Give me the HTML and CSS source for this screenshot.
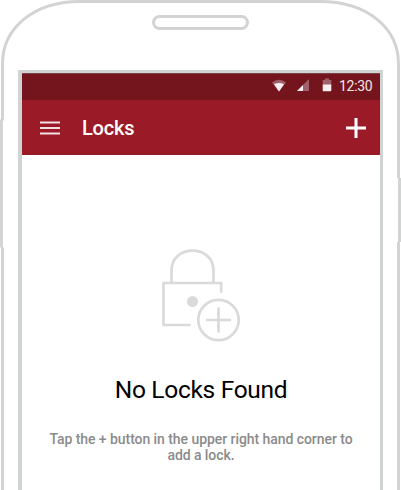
FILE: index.html
```html
<!DOCTYPE html>
<html lang="en">
<head>
<meta charset="utf-8">
<title>Locks</title>
<link rel="stylesheet" href="styles.css">
</head>
<body>
<div class="phone">
  <svg class="shell" viewBox="0 0 401 490" aria-hidden="true">
    <path d="M2.500 490V247.500M1.400 247.500V119.500M2.500 120.500V64C2.500 27 35 1.500 80 1.500H320C366 1.500 398.500 27 398.500 64V178M399.500 178V242M398.500 242V490"/>
  </svg>
  <div class="speaker"></div>
  <main class="screen">
    <div class="status">
      <svg class="status-icons" viewBox="0 0 64 16" aria-hidden="true">
        <path class="faint" d="M1 4.500Q8 -1 15 4.500L8 13.500Z"/>
        <path d="M3 6.300Q8 3.600 13 6.300L8 13.500Z"/>
        <path class="faint" d="M38 1V13H26Z"/>
        <path d="M32 7V13H26Z"/>
        <path class="faint" d="M51.700 2H54V.500H58V2H60.300V7H51.700Z"/>
        <path d="M51.700 6.500H60.300V12.500Q60.300 13.200 59.500 13.200H52.500Q51.700 13.200 51.700 12.500Z"/>
      </svg>
      <span class="time">12:30</span>
    </div>
    <header class="appbar">
      <svg class="menu" viewBox="0 0 20 14" aria-hidden="true"><path d="M0 1.500H20M0 7H20M0 12.500H20"/></svg>
      <h1 class="title">Locks</h1>
      <svg class="add" viewBox="0 0 20 20" aria-hidden="true"><path d="M10 0V20M0 10H20"/></svg>
    </header>
    <section class="empty">
      <svg class="lock" viewBox="0 0 80 94" aria-hidden="true">
        <path d="M11.500 34V22.500C11.500 -4 53.500 -4 53.500 22.500V34M29.500 77H3.500V35H61.200V43.800" />
        <circle class="keyhole" cx="32.500" cy="53.500" r="5.500"/>
        <circle cx="58.500" cy="72" r="20.200"/>
        <path d="M58.500 60.500V83.500M47 72H70"/>
      </svg>
      <h2 class="heading">No Locks Found</h2>
      <p class="hint">Tap the + button in the upper right hand corner to<br>add a lock.</p>
    </section>
  </main>
</div>
</body>
</html>
```
FILE: styles.css
```css
* { box-sizing: border-box; }
body {
  margin: 0;
  background: #fff;
  font-family: Roboto, sans-serif;
}
.phone {
  position: relative;
  height: 490px;
  padding-top: 15px;
  overflow: hidden;
}
.shell {
  position: absolute;
  inset: 0;
  width: 401px;
  height: 490px;
  fill: none;
  stroke: #d2d4d4;
  stroke-width: 3;
}
.speaker {
  width: 97px;
  height: 15px;
  margin-left: 152px;
  border: 3px solid #d2d4d4;
  border-radius: 8px;
}
.screen {
  position: relative;
  width: 365px;
  height: 440px;
  margin: 40px 0 0 18px;
  border: solid #d0d3d3;
  border-width: 3px 3px 0 4px;
}
.status {
  display: flex;
  align-items: center;
  justify-content: flex-end;
  height: 27px;
  padding-right: 8px;
  border-top: 1px solid #7c4349;
  background: #74151d;
  color: #f3e6e8;
}
.status-icons {
  width: 64px;
  height: 16px;
  margin: -2px 4px 0 0;
  fill: #f8eff0;
}
.status-icons .faint { fill: #a0616a; }
.time {
  width: 33px;
  margin-top: -2px;
  font-size: 14px;
  line-height: 16px;
  letter-spacing: -0.300px;
  white-space: nowrap;
}
.appbar {
  display: flex;
  align-items: center;
  height: 55px;
  padding: 0 14px 0 18px;
  background: #9a1b27;
  color: #fff;
}
.menu {
  width: 20px;
  height: 14px;
  stroke: #f2dfe1;
  stroke-width: 2;
}
.title {
  margin: 1px 0 0 22px;
  font-size: 20px;
  font-weight: 500;
  line-height: 24px;
  letter-spacing: -0.200px;
}
.add {
  width: 20px;
  height: 20px;
  margin-left: auto;
  stroke: #fff;
  stroke-width: 3;
}
.empty {
  display: flex;
  flex-direction: column;
  align-items: center;
  padding-top: 93px;
}
.lock {
  width: 80px;
  height: 94px;
  margin-right: 2px;
  fill: none;
  stroke: #dadada;
  stroke-width: 2.700;
  stroke-linecap: round;
}
.lock .keyhole {
  fill: #dadada;
  stroke: none;
}
.heading {
  margin: 33px 0 0;
  font-size: 24.500px;
  font-weight: 400;
  line-height: 30px;
  letter-spacing: -0.300px;
  color: #000;
}
.hint {
  margin: 26px 0 0;
  font-size: 14px;
  font-weight: 500;
  line-height: 16px;
  letter-spacing: -0.060px;
  text-align: center;
  white-space: nowrap;
  color: #8b8b8b;
}
```
